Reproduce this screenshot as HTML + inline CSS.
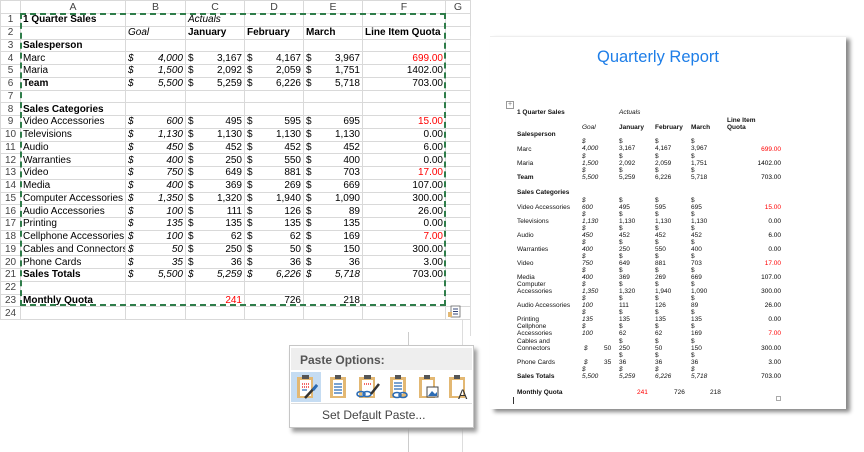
<!DOCTYPE html>
<html><head><meta charset="utf-8">
<style>
*{margin:0;padding:0;box-sizing:border-box}
body{width:864px;height:451px;background:#fff;position:relative;overflow:hidden;font-family:"Liberation Sans",Arial,sans-serif}
#xl{position:absolute;left:0;top:0;width:470px;border-collapse:collapse;table-layout:fixed;font-size:10px;color:#000}
#xl td{border:1px solid #d9d9d9;height:12.75px;line-height:11px;padding:0 2px;white-space:nowrap;overflow:hidden}
#xl tr.h td{height:13px;color:#444;text-align:center;font-size:10.5px;border-color:#d9d9d9}
#xl td.n{color:#444;text-align:center;padding:0;font-size:10px}
.b{font-weight:bold}.i{font-style:italic}.red{color:#f00!important}
.rt{text-align:right}
.cur{display:flex;justify-content:space-between}
#ants{position:absolute;left:20px;top:13px;width:426px;height:293px;border:2px dashed #2f7d4a}
.r{position:absolute;font-size:6.5px;line-height:7px;white-space:nowrap;color:#111}
.q{position:absolute;font-size:6.5px;line-height:7px;white-space:nowrap;text-align:right;width:60px;left:721px}
#page{position:absolute;left:490px;top:36px;width:356px;height:373px;background:#fff;box-shadow:4px 3px 4px #888;border-top:1px solid #eee}
#pop{position:absolute;left:289px;top:345px;width:185px;height:83px;background:#fff;border:1px solid #c6c6c6;box-shadow:3px 4px 4px #999}
.ic{position:absolute;top:28px;width:28px;height:27px}
</style></head><body>
<table id="xl">
<colgroup><col style="width:20px"><col style="width:105px"><col style="width:60px"><col style="width:59px"><col style="width:59px"><col style="width:59px"><col style="width:83px"><col style="width:25px"></colgroup>
<tr class="h"><td></td><td>A</td><td>B</td><td>C</td><td>D</td><td>E</td><td>F</td><td>G</td></tr>
<tr><td class="n">1</td><td class="b">1 Quarter Sales</td><td></td><td class="i">Actuals</td><td></td><td></td><td></td><td></td></tr>
<tr><td class="n">2</td><td></td><td class="i">Goal</td><td class="b">January</td><td class="b">February</td><td class="b">March</td><td class="b">Line Item Quota</td><td></td></tr>
<tr><td class="n">3</td><td class="b">Salesperson</td><td></td><td></td><td></td><td></td><td></td><td></td></tr>
<tr><td class="n">4</td><td>Marc</td><td class="i"><div class="cur"><span>$</span><span>4,000</span></div></td><td><div class="cur"><span>$</span><span>3,167</span></div></td><td><div class="cur"><span>$</span><span>4,167</span></div></td><td><div class="cur"><span>$</span><span>3,967</span></div></td><td class="rt red">699.00</td><td></td></tr>
<tr><td class="n">5</td><td>Maria</td><td class="i"><div class="cur"><span>$</span><span>1,500</span></div></td><td><div class="cur"><span>$</span><span>2,092</span></div></td><td><div class="cur"><span>$</span><span>2,059</span></div></td><td><div class="cur"><span>$</span><span>1,751</span></div></td><td class="rt">1402.00</td><td></td></tr>
<tr><td class="n">6</td><td class="b">Team</td><td class="i"><div class="cur"><span>$</span><span>5,500</span></div></td><td><div class="cur"><span>$</span><span>5,259</span></div></td><td><div class="cur"><span>$</span><span>6,226</span></div></td><td><div class="cur"><span>$</span><span>5,718</span></div></td><td class="rt">703.00</td><td></td></tr>
<tr><td class="n">7</td><td></td><td></td><td></td><td></td><td></td><td></td><td></td></tr>
<tr><td class="n">8</td><td class="b">Sales Categories</td><td></td><td></td><td></td><td></td><td></td><td></td></tr>
<tr><td class="n">9</td><td>Video Accessories</td><td class="i"><div class="cur"><span>$</span><span>600</span></div></td><td><div class="cur"><span>$</span><span>495</span></div></td><td><div class="cur"><span>$</span><span>595</span></div></td><td><div class="cur"><span>$</span><span>695</span></div></td><td class="rt red">15.00</td><td></td></tr>
<tr><td class="n">10</td><td>Televisions</td><td class="i"><div class="cur"><span>$</span><span>1,130</span></div></td><td><div class="cur"><span>$</span><span>1,130</span></div></td><td><div class="cur"><span>$</span><span>1,130</span></div></td><td><div class="cur"><span>$</span><span>1,130</span></div></td><td class="rt">0.00</td><td></td></tr>
<tr><td class="n">11</td><td>Audio</td><td class="i"><div class="cur"><span>$</span><span>450</span></div></td><td><div class="cur"><span>$</span><span>452</span></div></td><td><div class="cur"><span>$</span><span>452</span></div></td><td><div class="cur"><span>$</span><span>452</span></div></td><td class="rt">6.00</td><td></td></tr>
<tr><td class="n">12</td><td>Warranties</td><td class="i"><div class="cur"><span>$</span><span>400</span></div></td><td><div class="cur"><span>$</span><span>250</span></div></td><td><div class="cur"><span>$</span><span>550</span></div></td><td><div class="cur"><span>$</span><span>400</span></div></td><td class="rt">0.00</td><td></td></tr>
<tr><td class="n">13</td><td>Video</td><td class="i"><div class="cur"><span>$</span><span>750</span></div></td><td><div class="cur"><span>$</span><span>649</span></div></td><td><div class="cur"><span>$</span><span>881</span></div></td><td><div class="cur"><span>$</span><span>703</span></div></td><td class="rt red">17.00</td><td></td></tr>
<tr><td class="n">14</td><td>Media</td><td class="i"><div class="cur"><span>$</span><span>400</span></div></td><td><div class="cur"><span>$</span><span>369</span></div></td><td><div class="cur"><span>$</span><span>269</span></div></td><td><div class="cur"><span>$</span><span>669</span></div></td><td class="rt">107.00</td><td></td></tr>
<tr><td class="n">15</td><td>Computer Accessories</td><td class="i"><div class="cur"><span>$</span><span>1,350</span></div></td><td><div class="cur"><span>$</span><span>1,320</span></div></td><td><div class="cur"><span>$</span><span>1,940</span></div></td><td><div class="cur"><span>$</span><span>1,090</span></div></td><td class="rt">300.00</td><td></td></tr>
<tr><td class="n">16</td><td>Audio Accessories</td><td class="i"><div class="cur"><span>$</span><span>100</span></div></td><td><div class="cur"><span>$</span><span>111</span></div></td><td><div class="cur"><span>$</span><span>126</span></div></td><td><div class="cur"><span>$</span><span>89</span></div></td><td class="rt">26.00</td><td></td></tr>
<tr><td class="n">17</td><td>Printing</td><td class="i"><div class="cur"><span>$</span><span>135</span></div></td><td><div class="cur"><span>$</span><span>135</span></div></td><td><div class="cur"><span>$</span><span>135</span></div></td><td><div class="cur"><span>$</span><span>135</span></div></td><td class="rt">0.00</td><td></td></tr>
<tr><td class="n">18</td><td>Cellphone Accessories</td><td class="i"><div class="cur"><span>$</span><span>100</span></div></td><td><div class="cur"><span>$</span><span>62</span></div></td><td><div class="cur"><span>$</span><span>62</span></div></td><td><div class="cur"><span>$</span><span>169</span></div></td><td class="rt red">7.00</td><td></td></tr>
<tr><td class="n">19</td><td>Cables and Connectors</td><td class="i"><div class="cur"><span>$</span><span>50</span></div></td><td><div class="cur"><span>$</span><span>250</span></div></td><td><div class="cur"><span>$</span><span>50</span></div></td><td><div class="cur"><span>$</span><span>150</span></div></td><td class="rt">300.00</td><td></td></tr>
<tr><td class="n">20</td><td>Phone Cards</td><td class="i"><div class="cur"><span>$</span><span>35</span></div></td><td><div class="cur"><span>$</span><span>36</span></div></td><td><div class="cur"><span>$</span><span>36</span></div></td><td><div class="cur"><span>$</span><span>36</span></div></td><td class="rt">3.00</td><td></td></tr>
<tr><td class="n">21</td><td class="b">Sales Totals</td><td class="i"><div class="cur"><span>$</span><span>5,500</span></div></td><td class="i"><div class="cur"><span>$</span><span>5,259</span></div></td><td class="i"><div class="cur"><span>$</span><span>6,226</span></div></td><td class="i"><div class="cur"><span>$</span><span>5,718</span></div></td><td class="rt">703.00</td><td></td></tr>
<tr><td class="n">22</td><td></td><td></td><td></td><td></td><td></td><td></td><td></td></tr>
<tr><td class="n">23</td><td class="b">Monthly Quota</td><td></td><td class="rt red">241</td><td class="rt">726</td><td class="rt">218</td><td></td><td></td></tr>
<tr><td class="n">24</td><td></td><td></td><td></td><td></td><td></td><td></td><td></td></tr>
</table>
<div id="ants"></div>
<div style="position:absolute;left:470px;top:36px;width:1px;height:300px;background:#ddd"></div>
<svg style="position:absolute;left:448px;top:305px" width="13" height="13"><rect x="3" y="1" width="9" height="11" fill="#fff" stroke="#666" stroke-width=".8"/><line x1="5" y1="4" x2="10" y2="4" stroke="#347"/><line x1="5" y1="6.5" x2="10" y2="6.5" stroke="#347"/><line x1="5" y1="9" x2="10" y2="9" stroke="#347"/><rect x="0" y="7" width="4" height="5" fill="#e3b873"/></svg>

<div id="page"></div>
<div style="position:absolute;left:597px;top:48px;font-size:16.5px;color:#1e7ee8">Quarterly Report</div>
<div style="position:absolute;left:506px;top:101px;width:8px;height:8px;border:1px solid #999;font-size:7px;line-height:6px;text-align:center;color:#777">+</div>

<div class="r b" style="left:517px;top:109px">1 Quarter Sales</div>
<div class="r i" style="left:619px;top:109px">Actuals</div>
<div class="r i" style="left:582px;top:124px">Goal</div>
<div class="r b" style="left:619px;top:124px">January</div>
<div class="r b" style="left:655px;top:124px">February</div>
<div class="r b" style="left:691px;top:124px">March</div>
<div class="r b" style="left:727px;top:117px;line-height:7px">Line Item<br>Quota</div>
<div class="r b" style="left:517px;top:131px">Salesperson</div>
<div class="r b" style="left:517px;top:189px">Sales Categories</div>

<div class="r" style="left:517px;top:146px">Marc</div>
<div class="r i" style="left:582px;top:138px">$<br>4,000</div><div class="r" style="left:619px;top:138px">$<br>3,167</div><div class="r" style="left:655px;top:138px">$<br>4,167</div><div class="r" style="left:691px;top:138px">$<br>3,967</div><div class="q red" style="top:146px">699.00</div>

<div class="r" style="left:517px;top:160px">Maria</div>
<div class="r i" style="left:582px;top:153px">$<br>1,500</div><div class="r" style="left:619px;top:153px">$<br>2,092</div><div class="r" style="left:655px;top:153px">$<br>2,059</div><div class="r" style="left:691px;top:153px">$<br>1,751</div><div class="q" style="top:160px">1402.00</div>

<div class="r b" style="left:517px;top:174px">Team</div>
<div class="r i" style="left:582px;top:167px">$<br>5,500</div><div class="r" style="left:619px;top:167px">$<br>5,259</div><div class="r" style="left:655px;top:167px">$<br>6,226</div><div class="r" style="left:691px;top:167px">$<br>5,718</div><div class="q" style="top:174px">703.00</div>

<div class="r" style="left:517px;top:204px">Video Accessories</div>
<div class="r i" style="left:582px;top:197px">$<br>600</div><div class="r" style="left:619px;top:197px">$<br>495</div><div class="r" style="left:655px;top:197px">$<br>595</div><div class="r" style="left:691px;top:197px">$<br>695</div><div class="q red" style="top:204px">15.00</div>

<div class="r" style="left:517px;top:218px">Televisions</div>
<div class="r i" style="left:582px;top:211px">$<br>1,130</div><div class="r" style="left:619px;top:211px">$<br>1,130</div><div class="r" style="left:655px;top:211px">$<br>1,130</div><div class="r" style="left:691px;top:211px">$<br>1,130</div><div class="q" style="top:218px">0.00</div>

<div class="r" style="left:517px;top:232px">Audio</div>
<div class="r i" style="left:582px;top:225px">$<br>450</div><div class="r" style="left:619px;top:225px">$<br>452</div><div class="r" style="left:655px;top:225px">$<br>452</div><div class="r" style="left:691px;top:225px">$<br>452</div><div class="q" style="top:232px">6.00</div>

<div class="r" style="left:517px;top:246px">Warranties</div>
<div class="r i" style="left:582px;top:239px">$<br>400</div><div class="r" style="left:619px;top:239px">$<br>250</div><div class="r" style="left:655px;top:239px">$<br>550</div><div class="r" style="left:691px;top:239px">$<br>400</div><div class="q" style="top:246px">0.00</div>

<div class="r" style="left:517px;top:260px">Video</div>
<div class="r i" style="left:582px;top:253px">$<br>750</div><div class="r" style="left:619px;top:253px">$<br>649</div><div class="r" style="left:655px;top:253px">$<br>881</div><div class="r" style="left:691px;top:253px">$<br>703</div><div class="q red" style="top:260px">17.00</div>

<div class="r" style="left:517px;top:274px">Media</div>
<div class="r i" style="left:582px;top:267px">$<br>400</div><div class="r" style="left:619px;top:267px">$<br>369</div><div class="r" style="left:655px;top:267px">$<br>269</div><div class="r" style="left:691px;top:267px">$<br>669</div><div class="q" style="top:274px">107.00</div>

<div class="r" style="left:517px;top:281px">Computer<br>Accessories</div>
<div class="r i" style="left:582px;top:281px">$<br>1,350</div><div class="r" style="left:619px;top:281px">$<br>1,320</div><div class="r" style="left:655px;top:281px">$<br>1,940</div><div class="r" style="left:691px;top:281px">$<br>1,090</div><div class="q" style="top:288px">300.00</div>

<div class="r" style="left:517px;top:302px">Audio Accessories</div>
<div class="r i" style="left:582px;top:295px">$<br>100</div><div class="r" style="left:619px;top:295px">$<br>111</div><div class="r" style="left:655px;top:295px">$<br>126</div><div class="r" style="left:691px;top:295px">$<br>89</div><div class="q" style="top:302px">26.00</div>

<div class="r" style="left:517px;top:316px">Printing</div>
<div class="r i" style="left:582px;top:309px">$<br>135</div><div class="r" style="left:619px;top:309px">$<br>135</div><div class="r" style="left:655px;top:309px">$<br>135</div><div class="r" style="left:691px;top:309px">$<br>135</div><div class="q" style="top:316px">0.00</div>

<div class="r" style="left:517px;top:323px">Cellphone<br>Accessories</div>
<div class="r i" style="left:582px;top:323px">$<br>100</div><div class="r" style="left:619px;top:323px">$<br>62</div><div class="r" style="left:655px;top:323px">$<br>62</div><div class="r" style="left:691px;top:323px">$<br>169</div><div class="q red" style="top:330px">7.00</div>

<div class="r" style="left:517px;top:338px">Cables and<br>Connectors</div>
<div class="r i" style="left:584px;top:345px">$</div><div class="r" style="left:604px;top:345px">50</div><div class="r" style="left:619px;top:338px">$<br>250</div><div class="r" style="left:655px;top:338px">$<br>50</div><div class="r" style="left:691px;top:338px">$<br>150</div><div class="q" style="top:345px">300.00</div>

<div class="r" style="left:517px;top:359px">Phone Cards</div>
<div class="r i" style="left:584px;top:359px">$</div><div class="r" style="left:604px;top:359px">35</div><div class="r" style="left:619px;top:352px">$<br>36</div><div class="r" style="left:655px;top:352px">$<br>36</div><div class="r" style="left:691px;top:352px">$<br>36</div><div class="q" style="top:359px">3.00</div>

<div class="r b" style="left:517px;top:373px">Sales Totals</div>
<div class="r i" style="left:582px;top:366px">$<br>5,500</div><div class="r i" style="left:619px;top:366px">$<br>5,259</div><div class="r i" style="left:655px;top:366px">$<br>6,226</div><div class="r i" style="left:691px;top:366px">$<br>5,718</div><div class="q" style="top:373px">703.00</div>

<div class="r b" style="left:517px;top:389px">Monthly Quota</div>
<div class="r red" style="left:637px;top:389px">241</div><div class="r" style="left:674px;top:389px">726</div><div class="r" style="left:710px;top:389px">218</div>
<div style="position:absolute;left:513px;top:397px;width:1px;height:7px;background:#333"></div>
<div style="position:absolute;left:776px;top:396px;width:5px;height:5px;border:1px solid #aaa"></div>

<div style="position:absolute;left:408px;top:332px;width:1px;height:120px;background:#ccc"></div>
<div style="position:absolute;left:462px;top:320px;width:1px;height:132px;background:#ddd"></div>

<div id="pop">
 <div style="position:absolute;left:1px;top:2px;right:1px;height:22px;background:#eeeeee;font-size:12px;font-weight:bold;color:#555;padding:5px 0 0 9px">Paste Options:</div>
 <div style="position:absolute;left:1px;top:26px;width:30px;height:30px;background:#c5dcf2"></div>
 <svg class="ic" style="left:3px" viewBox="0 0 28 27"><rect x="4" y="3" width="16" height="21" fill="#e3b873"/><rect x="7" y="6" width="11" height="16" fill="#fff"/><rect x="9" y="1" width="7" height="4" fill="#555"/><path d="M9 10h7M9 13h7" stroke="#e33" stroke-width="1.5" stroke-dasharray="1 1"/><path d="M9 16h5" stroke="#2a6bb5" stroke-width="1.2"/><path d="M24 11 12 24" stroke="#333" stroke-width="2.5"/><path d="M24 11 20 16" stroke="#2a6bb5" stroke-width="3"/></svg>
 <svg class="ic" style="left:34px" viewBox="0 0 28 27"><rect x="6" y="3" width="16" height="21" fill="#e3b873"/><rect x="9" y="6" width="10" height="16" fill="#fff"/><rect x="11" y="1" width="6" height="4" fill="#555"/><path d="M10 10h8M10 13h8M10 16h8M10 19h8" stroke="#2a6bb5" stroke-width="1.2"/></svg>
 <svg class="ic" style="left:64px" viewBox="0 0 28 27"><rect x="5" y="3" width="16" height="21" fill="#e3b873"/><rect x="8" y="6" width="11" height="16" fill="#fff"/><rect x="10" y="1" width="7" height="4" fill="#555"/><path d="M10 10h7" stroke="#e33" stroke-width="1.5" stroke-dasharray="1 1"/><ellipse cx="7" cy="20" rx="4" ry="2.5" fill="none" stroke="#2a6bb5" stroke-width="1.6"/><ellipse cx="13" cy="20" rx="4" ry="2.5" fill="none" stroke="#2a6bb5" stroke-width="1.6"/><path d="M25 10 17 20" stroke="#333" stroke-width="2.5"/></svg>
 <svg class="ic" style="left:94px" viewBox="0 0 28 27"><rect x="6" y="3" width="16" height="21" fill="#e3b873"/><rect x="9" y="6" width="10" height="14" fill="#fff"/><rect x="11" y="1" width="6" height="4" fill="#555"/><path d="M10 9h8M10 12h8M10 15h8" stroke="#2a6bb5" stroke-width="1.2"/><ellipse cx="13" cy="21" rx="4" ry="2.5" fill="#fff" stroke="#2a6bb5" stroke-width="1.6"/><ellipse cx="19" cy="21" rx="4" ry="2.5" fill="none" stroke="#2a6bb5" stroke-width="1.6"/></svg>
 <svg class="ic" style="left:124px" viewBox="0 0 28 27"><rect x="5" y="3" width="16" height="21" fill="#e3b873"/><rect x="8" y="6" width="11" height="16" fill="#fff"/><rect x="10" y="1" width="6" height="4" fill="#555"/><rect x="13" y="13" width="11" height="10" fill="#fff" stroke="#444"/><path d="M14 22l4-5 3 3 2-2v4z" fill="#2a6bb5"/></svg>
 <svg class="ic" style="left:154px" viewBox="0 0 28 27"><rect x="5" y="3" width="16" height="21" fill="#e3b873"/><rect x="8" y="6" width="11" height="16" fill="#fff"/><rect x="10" y="1" width="6" height="4" fill="#555"/><text x="14" y="25" font-family="Liberation Sans" font-size="14" fill="#333">A</text></svg>
 <div style="position:absolute;left:1px;right:1px;top:57px;height:1px;background:#ddd"></div>
 <div style="position:absolute;left:32px;top:62px;font-size:12px;color:#444">Set Def<u>a</u>ult Paste...</div>
</div>
</body></html>
